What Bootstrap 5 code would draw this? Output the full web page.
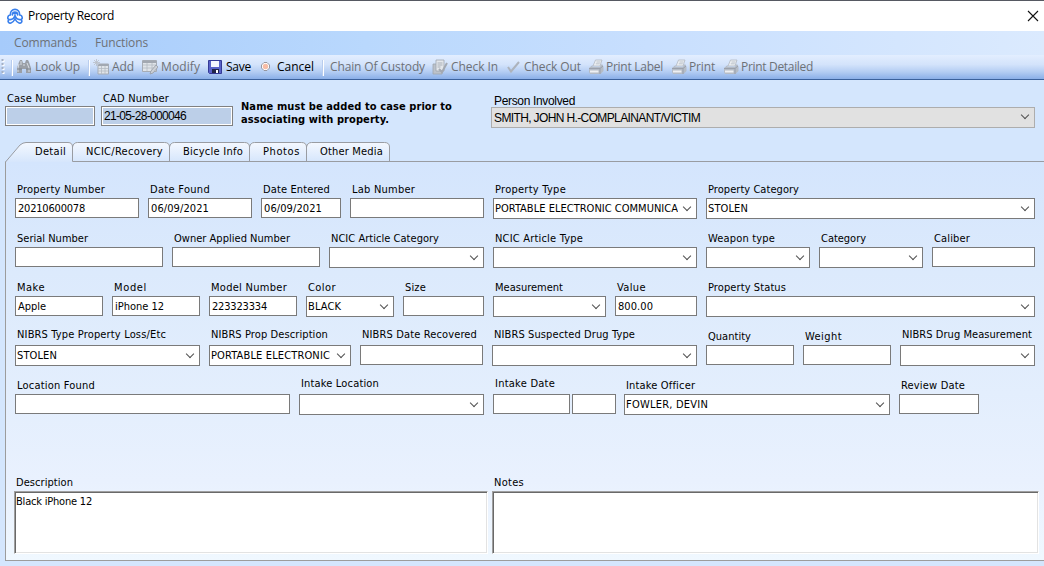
<!DOCTYPE html>
<html lang="en">
<head>
<meta charset="utf-8">
<title>Property Record</title>
<meta name="viewport" content="width=device-width, initial-scale=1">
<link href="https://cdn.jsdelivr.net/npm/bootstrap@5.3.0/dist/css/bootstrap.min.css" rel="stylesheet">
<style>
body{width:1044px;height:566px;overflow:hidden;background:#d4e6fd;color:#000;font:11px/14px "DejaVu Sans Condensed","DejaVu Sans",sans-serif}
.segoe{font-family:"Open Sans","Noto Sans",sans-serif;font-size:12px}
.arial{font-family:"Liberation Sans",Arial,sans-serif;font-size:12px}
[data-w]{white-space:pre;display:inline-block}
.titlebar{height:31px;border-top:1px solid #565962;background:#fff;padding:0 5px 0 7px}
.titlebar .caption-text{margin-left:5px}
.menubar{height:24px;background:linear-gradient(90deg,#a6cbfb,#b9d8fd 35%,#c8dffe 62%,#dbeafe);padding-left:14px;column-gap:18px;color:#6d7177}
.tools{height:25px;background:linear-gradient(#e3eeff,#d3e3fb 40%,#b4cdf3 70%,#8aafe8);border-bottom:1px solid #3b619c;display:grid;grid-template-columns:16px 77px 49px 65px 51px 72px 102px 73px 83px 83px 52px 120px;color:#6d7177}
.tool{display:flex;align-items:center;position:relative}
.tool svg{width:16px;height:16px;margin-right:3px;flex:none}
.tool.near svg{margin-right:2px}
.tool.sep::before{content:"";position:absolute;left:-4px;top:5px;width:1px;height:16px;background:#fff;box-shadow:-1px 0 #b9cdee}
.tool.sep.far::before{left:-7px}
.on{color:#000}
.headrow{height:62px;padding:11px 9px 0 5px}
.case-col{width:90px}
.cad-col{width:132px;margin-left:6px}
.person-col{width:544px}
.headrow .lbl{height:15px;padding-top:1px}
.person-col .lbl{height:12px;padding-left:3px;line-height:11px}
.person-col .inp>span{padding-left:1px;line-height:16px}
.locked{height:20px;border:1px solid #808080;box-shadow:inset 0 0 0 1px #fff;background:#bccfe8;padding:2px 2px 0;line-height:14px}
.tabstrip{height:19px;position:relative}
.tabstrip>svg{position:absolute;left:0;top:0}
.tabs{display:grid;grid-template-columns:73px 97px 80px 57px 83px;position:relative;line-height:19px}
.tabs>div{padding-left:13px}
.tabs>div:first-child{padding-left:35px}
.panel{margin-left:5px;height:400px;border:1px solid #9c9c9c;border-right:0;border-top-color:transparent;background:linear-gradient(#d4e5fd,#dceafc 28%,#e3eefd 58%,#e9f1fe 80%,#f0f8ff) padding-box;padding:0 9px}
.fields{display:grid;column-gap:9px;height:49px}
.r1{grid-template-columns:124px 104px 80px 134px 204px 329px;margin-top:19px}
.r2{grid-template-columns:148px 148px 155px 204px 104px 104px 103px}
.r3{grid-template-columns:88px 88px 88px 88px 81px 113px 82px 329px}
.r4{grid-template-columns:185px 142px 123px 205px 88px 88px 135px}
.r5{grid-template-columns:275px 185px 123px 266px 80px}
.r5 .split{display:grid;grid-template-columns:77px 44px;column-gap:2px}
.r5 .pull{margin-left:-1px;width:266px}
.r5 .pull+.field{margin-left:-1px;width:80px}
.field{min-width:0}
.lbl{height:17px;padding:2px 0 0 2px;line-height:14px;white-space:nowrap}
.up .lbl{padding-top:0}
.inp{height:20px;background:#fff;border:1px solid #7a7a7a;padding:3px 2px 0;line-height:14px;white-space:nowrap;overflow:hidden}
.combo{height:21px;padding:3px 4px 0 1px;display:flex;justify-content:space-between}
.combo.off{background:#e1e1e1;border-color:#adadad;padding-top:2px}
.combo::after{content:"";width:6px;height:6px;border:solid #505050;border-width:0 1.2px 1.2px 0;transform:rotate(45deg);margin:2px 2px 0 auto;flex:none}
.clip{overflow:hidden;white-space:nowrap}
.memos{display:grid;grid-template-columns:474px 547px;column-gap:4px;margin:48px 0 0 -1px}
.memo{height:63px;background:#fff;border:1px solid;border-color:#a0a0a0 #fff #fff #a0a0a0;box-shadow:inset 1px 1px #696969,inset -1px -1px #e3e3e3;padding:3px 1px}
.warn{font-weight:700;line-height:13px;margin-left:8px;width:250px;padding-top:9px}
</style>
</head>
<body>
<svg width="0" height="0" class="position-absolute">
<symbol id="printer" viewBox="0 0 16 16"><path d="M5 7 7.500 1H14l-2 6z" fill="#eceff2" stroke="#b3b9c1" stroke-width=".8"/><path d="M8.500 3h4M7.800 4.800h4" stroke="#b3b9c1" stroke-width=".8"/><path d="M1 9 4 6.500h1L4.500 8H12l.8-2.500h1.700L15.500 8v4l-3 3H2l-1-2z" fill="#b5bcc6"/><path d="M1 9.500h11l3-2.500M12 9.500V15" stroke="#949ba6" stroke-width=".8" fill="none"/><path d="M2 12.500h8.500" stroke="#eef0f3" stroke-width="2"/></symbol>
</svg>
<header>
<div class="titlebar d-flex align-items-center segoe">
<svg width="16" height="17" viewBox="0 0 16 17" fill="none" stroke="#3a80ec" stroke-width="1.600" stroke-linecap="round"><path d="M3.500 7C2.500-.5 13.500-.5 12.500 7M5.500 7c-.5-4 5.500-4 5 0M3.500 7C.5 7 0 11 2 11.500c3 .5 5-1 6-4 1 3 3 4.500 6 4C16 11 15.500 7 12.500 7M2 11.500c-2 2 0 4 2 3.500s3-2 4-4c1 2 2 3.500 4 4s4-1.500 2-3.500M6 4.500c1 1.500 3 1.500 4 0"/></svg>
<span class="caption-text" data-w="86">Property Record</span>
<svg class="ms-auto" width="12" height="12" viewBox="0 0 12 12"><path d="M1 1l10 10M11 1 1 11" stroke="#111" stroke-width="1.100"/></svg>
</div>
<nav class="menubar d-flex align-items-center segoe"><span data-w="63">Commands</span><span data-w="53">Functions</span></nav>
<div class="tools segoe">
<div class="tool"><svg viewBox="0 0 16 16"><path d="M3.500 1v15" stroke="#fff" stroke-width="2" stroke-dasharray="2 2"/><path d="M2.500 0v15" stroke="#a3afc4" stroke-width="2" stroke-dasharray="2 2"/></svg></div>
<div class="tool sep"><svg viewBox="0 0 16 16"><path d="M3 3 4 1h2l1 3h2l1-3h2l1 2 2 6v5h-5v-4H6v4H1V9z" fill="#9a9fa7"/><path d="M3 5 2 9v4M11 4l2 5v4M5 2v4M7 6h2" stroke="#d8dde4" fill="none"/><path d="M1 10h5M10 10h5" stroke="#7d838c"/></svg><span data-w="45">Look Up</span></div>
<div class="tool sep"><svg viewBox="0 0 16 16"><path d="M5 5h10.500v10H5z" fill="#e0e4e9" stroke="#a6acb5"/><path d="M5 6h10" stroke="#a2a8b1" stroke-width="2"/><path d="M5 9.500h10M5 12h10M8.500 7v8M12 7v8" stroke="#b4bac2" stroke-width=".8"/><path d="M3.500 0v7M0 3.500h7M1 1l5 5M6 1 1 6" stroke="#b9bec5" stroke-width=".8"/></svg><span data-w="22">Add</span></div>
<div class="tool"><svg viewBox="0 0 16 16"><path d="M.5 1.500h14v11H.5z" fill="#e0e4e9" stroke="#a6acb5"/><path d="M.5 3h14" stroke="#a2a8b1" stroke-width="2"/><path d="M1 6h13M1 9h13M5 4v8M10 4v8" stroke="#b4bac2" stroke-width=".8"/><path d="m9 12 5-6 2 2-5 6-3 1z" fill="#cdd1d7" stroke="#979da6" stroke-width=".8"/></svg><span data-w="39">Modify</span></div>
<div class="tool on"><svg viewBox="0 0 16 16"><path d="M1.500 1.500h13v13h-12l-1-1z" fill="#5962c8" stroke="#343a96"/><path d="M4 2h8v6H4z" fill="#f4f6ff"/><path d="M5 10h7v4H5z" fill="#202448"/><path d="M9 11h2v3H9z" fill="#fff"/></svg><span data-w="25">Save</span></div>
<div class="tool on"><svg viewBox="0 0 16 16"><path d="M6 3.500h3L11.500 6v3L9 11.500H6L3.500 9V6z" fill="#fff" stroke="#8f8d95" stroke-width=".9"/><circle cx="7.500" cy="7.500" r="2.700" fill="#f7bda6"/></svg><span data-w="37">Cancel</span></div>
<div class="tool sep far"><span data-w="95">Chain Of Custody</span></div>
<div class="tool"><svg viewBox="0 0 16 16"><path d="M1 5h9v10H1z" fill="#bcc2ca" stroke="#a0a6af" stroke-width=".8"/><path d="M4 1h8v11H4z" fill="#e4e7eb" stroke="#a0a6af" stroke-width=".8"/><path d="M5.500 4h5M5.500 6h5M5.500 8h3" stroke="#a9afb7"/><path d="m7 10 3 3 5-9" fill="none" stroke="#a3a9b2" stroke-width="2"/></svg><span data-w="47">Check In</span></div>
<div class="tool"><svg viewBox="0 0 16 16"><path d="m3 8 3 4.500L14 3" fill="none" stroke="#adb3bc" stroke-width="2"/></svg><span data-w="57">Check Out</span></div>
<div class="tool near"><svg><use href="#printer"/></svg><span data-w="57">Print Label</span></div>
<div class="tool near"><svg><use href="#printer"/></svg><span data-w="26">Print</span></div>
<div class="tool near"><svg><use href="#printer"/></svg><span data-w="72">Print Detailed</span></div>
</div>
</header>
<section class="headrow d-flex">
<div class="case-col"><div class="lbl"><span data-w="69">Case Number</span></div><div class="locked"></div></div>
<div class="cad-col"><div class="lbl"><span data-w="66">CAD Number</span></div><div class="locked arial"><span data-w="82">21-05-28-000046</span></div></div>
<div class="warn"><span data-w="211">Name must be added to case prior to</span><br><span data-w="148">associating with property.</span></div>
<div class="person-col pt-1"><div class="lbl arial"><span data-w="81">Person Involved</span></div><div class="inp combo off arial"><span data-w="206">SMITH, JOHN H.-COMPLAINANT/VICTIM</span></div></div>
</section>
<div class="tabstrip">
<svg width="1044" height="20" viewBox="0 0 1044 20"><defs><linearGradient id="tg" x2="0" y2="1"><stop stop-color="#f4f8ff"/><stop offset="1" stop-color="#d6e6fc"/></linearGradient></defs>
<path d="M5.500 20 20 3q3-2.500 6-2.500h43q3.500 0 3.500 4V20z" fill="url(#tg)"/>
<path d="M72.500 19.500V5q1-4.500 5-4.500h88q4 0 4 4 1-4 5-4h70q5 0 5 4 1-4 5-4h48q4 0 4 4 1-4 5-4h74q4 0 4 4v15z" fill="url(#tg)"/>
<path d="M5.500 20 20 3q3-2.500 6-2.500h42q4.500 0 4.500 4.500v14.500H1044M72.500 5q1-4.500 5-4.500h87q5 0 5 4.500v14M169.500 5q1-4.500 5-4.500h70q5 0 5 4.500v14M249.500 5q1-4.500 5-4.500h47q5 0 5 4.500v14M306.500 5q1-4.500 5-4.500h73q5 0 5 4.500v14" fill="none" stroke="#999ca2"/></svg>
<div class="tabs"><div><span data-w="31">Detail</span></div><div><span data-w="77">NCIC/Recovery</span></div><div><span data-w="60">Bicycle Info</span></div><div><span data-w="37">Photos</span></div><div><span data-w="63">Other Media</span></div></div>
</div>
<main class="panel">
<div class="fields r1">
<div class="field"><div class="lbl"><span data-w="88">Property Number</span></div><div class="inp"><span data-w="67">20210600078</span></div></div>
<div class="field"><div class="lbl"><span data-w="60">Date Found</span></div><div class="inp"><span data-w="58">06/09/2021</span></div></div>
<div class="field"><div class="lbl"><span data-w="67">Date Entered</span></div><div class="inp"><span data-w="58">06/09/2021</span></div></div>
<div class="field"><div class="lbl"><span data-w="63">Lab Number</span></div><div class="inp"></div></div>
<div class="field"><div class="lbl"><span data-w="71">Property Type</span></div><div class="inp combo"><span class="clip"><span data-w="183">PORTABLE ELECTRONIC COMMUNICA</span></span></div></div>
<div class="field"><div class="lbl"><span data-w="91">Property Category</span></div><div class="inp combo"><span data-w="40">STOLEN</span></div></div>
</div>
<div class="fields r2">
<div class="field"><div class="lbl"><span data-w="71">Serial Number</span></div><div class="inp"></div></div>
<div class="field"><div class="lbl"><span data-w="116">Owner Applied Number</span></div><div class="inp"></div></div>
<div class="field"><div class="lbl"><span data-w="108">NCIC Article Category</span></div><div class="inp combo"></div></div>
<div class="field"><div class="lbl"><span data-w="88">NCIC Article Type</span></div><div class="inp combo"></div></div>
<div class="field"><div class="lbl"><span data-w="67">Weapon type</span></div><div class="inp combo"></div></div>
<div class="field"><div class="lbl"><span data-w="45">Category</span></div><div class="inp combo"></div></div>
<div class="field"><div class="lbl"><span data-w="36">Caliber</span></div><div class="inp"></div></div>
</div>
<div class="fields r3">
<div class="field"><div class="lbl"><span data-w="28">Make</span></div><div class="inp"><span data-w="28">Apple</span></div></div>
<div class="field"><div class="lbl"><span data-w="33">Model</span></div><div class="inp"><span data-w="49">iPhone 12</span></div></div>
<div class="field"><div class="lbl"><span data-w="76">Model Number</span></div><div class="inp"><span data-w="55">223323334</span></div></div>
<div class="field"><div class="lbl"><span data-w="28">Color</span></div><div class="inp combo"><span data-w="33">BLACK</span></div></div>
<div class="field"><div class="lbl"><span data-w="21">Size</span></div><div class="inp"></div></div>
<div class="field"><div class="lbl"><span data-w="68">Measurement</span></div><div class="inp combo"></div></div>
<div class="field"><div class="lbl"><span data-w="29">Value</span></div><div class="inp"><span data-w="35">800.00</span></div></div>
<div class="field"><div class="lbl"><span data-w="78">Property Status</span></div><div class="inp combo"></div></div>
</div>
<div class="fields r4">
<div class="field up"><div class="lbl"><span data-w="149">NIBRS Type Property Loss/Etc</span></div><div class="inp combo"><span data-w="40">STOLEN</span></div></div>
<div class="field up"><div class="lbl"><span data-w="117">NIBRS Prop Description</span></div><div class="inp combo"><span data-w="119">PORTABLE ELECTRONIC</span></div></div>
<div class="field up"><div class="lbl"><span data-w="115">NIBRS Date Recovered</span></div><div class="inp"></div></div>
<div class="field up"><div class="lbl"><span data-w="141">NIBRS Suspected Drug Type</span></div><div class="inp combo"></div></div>
<div class="field"><div class="lbl"><span data-w="43">Quantity</span></div><div class="inp"></div></div>
<div class="field"><div class="lbl"><span data-w="37">Weight</span></div><div class="inp"></div></div>
<div class="field up"><div class="lbl"><span data-w="130">NIBRS Drug Measurement</span></div><div class="inp combo"></div></div>
</div>
<div class="fields r5">
<div class="field"><div class="lbl"><span data-w="78">Location Found</span></div><div class="inp"></div></div>
<div class="field up"><div class="lbl"><span data-w="78">Intake Location</span></div><div class="inp combo"></div></div>
<div class="field up"><div class="lbl"><span data-w="60">Intake Date</span></div><div class="split"><div class="inp"></div><div class="inp"></div></div></div>
<div class="field pull"><div class="lbl"><span data-w="69">Intake Officer</span></div><div class="inp combo"><span data-w="82">FOWLER, DEVIN</span></div></div>
<div class="field"><div class="lbl"><span data-w="64">Review Date</span></div><div class="inp"></div></div>
</div>
<div class="memos">
<div><div class="lbl"><span data-w="57">Description</span></div><div class="memo"><span data-w="76">Black iPhone 12</span></div></div>
<div><div class="lbl"><span data-w="30">Notes</span></div><div class="memo"></div></div>
</div>
</main>
<script src="https://cdn.jsdelivr.net/npm/bootstrap@5.3.0/dist/js/bootstrap.bundle.min.js"></script>
<script>
// Track each caption so it occupies its nominal width in any installed font.
document.querySelectorAll('[data-w]').forEach(function (el) {
  var r = document.createRange();
  r.selectNodeContents(el);
  var w = r.getBoundingClientRect().width;
  el.style.letterSpacing = ((+el.dataset.w - w) / el.textContent.length).toFixed(3) + 'px';
});
</script>
</body>
</html>
